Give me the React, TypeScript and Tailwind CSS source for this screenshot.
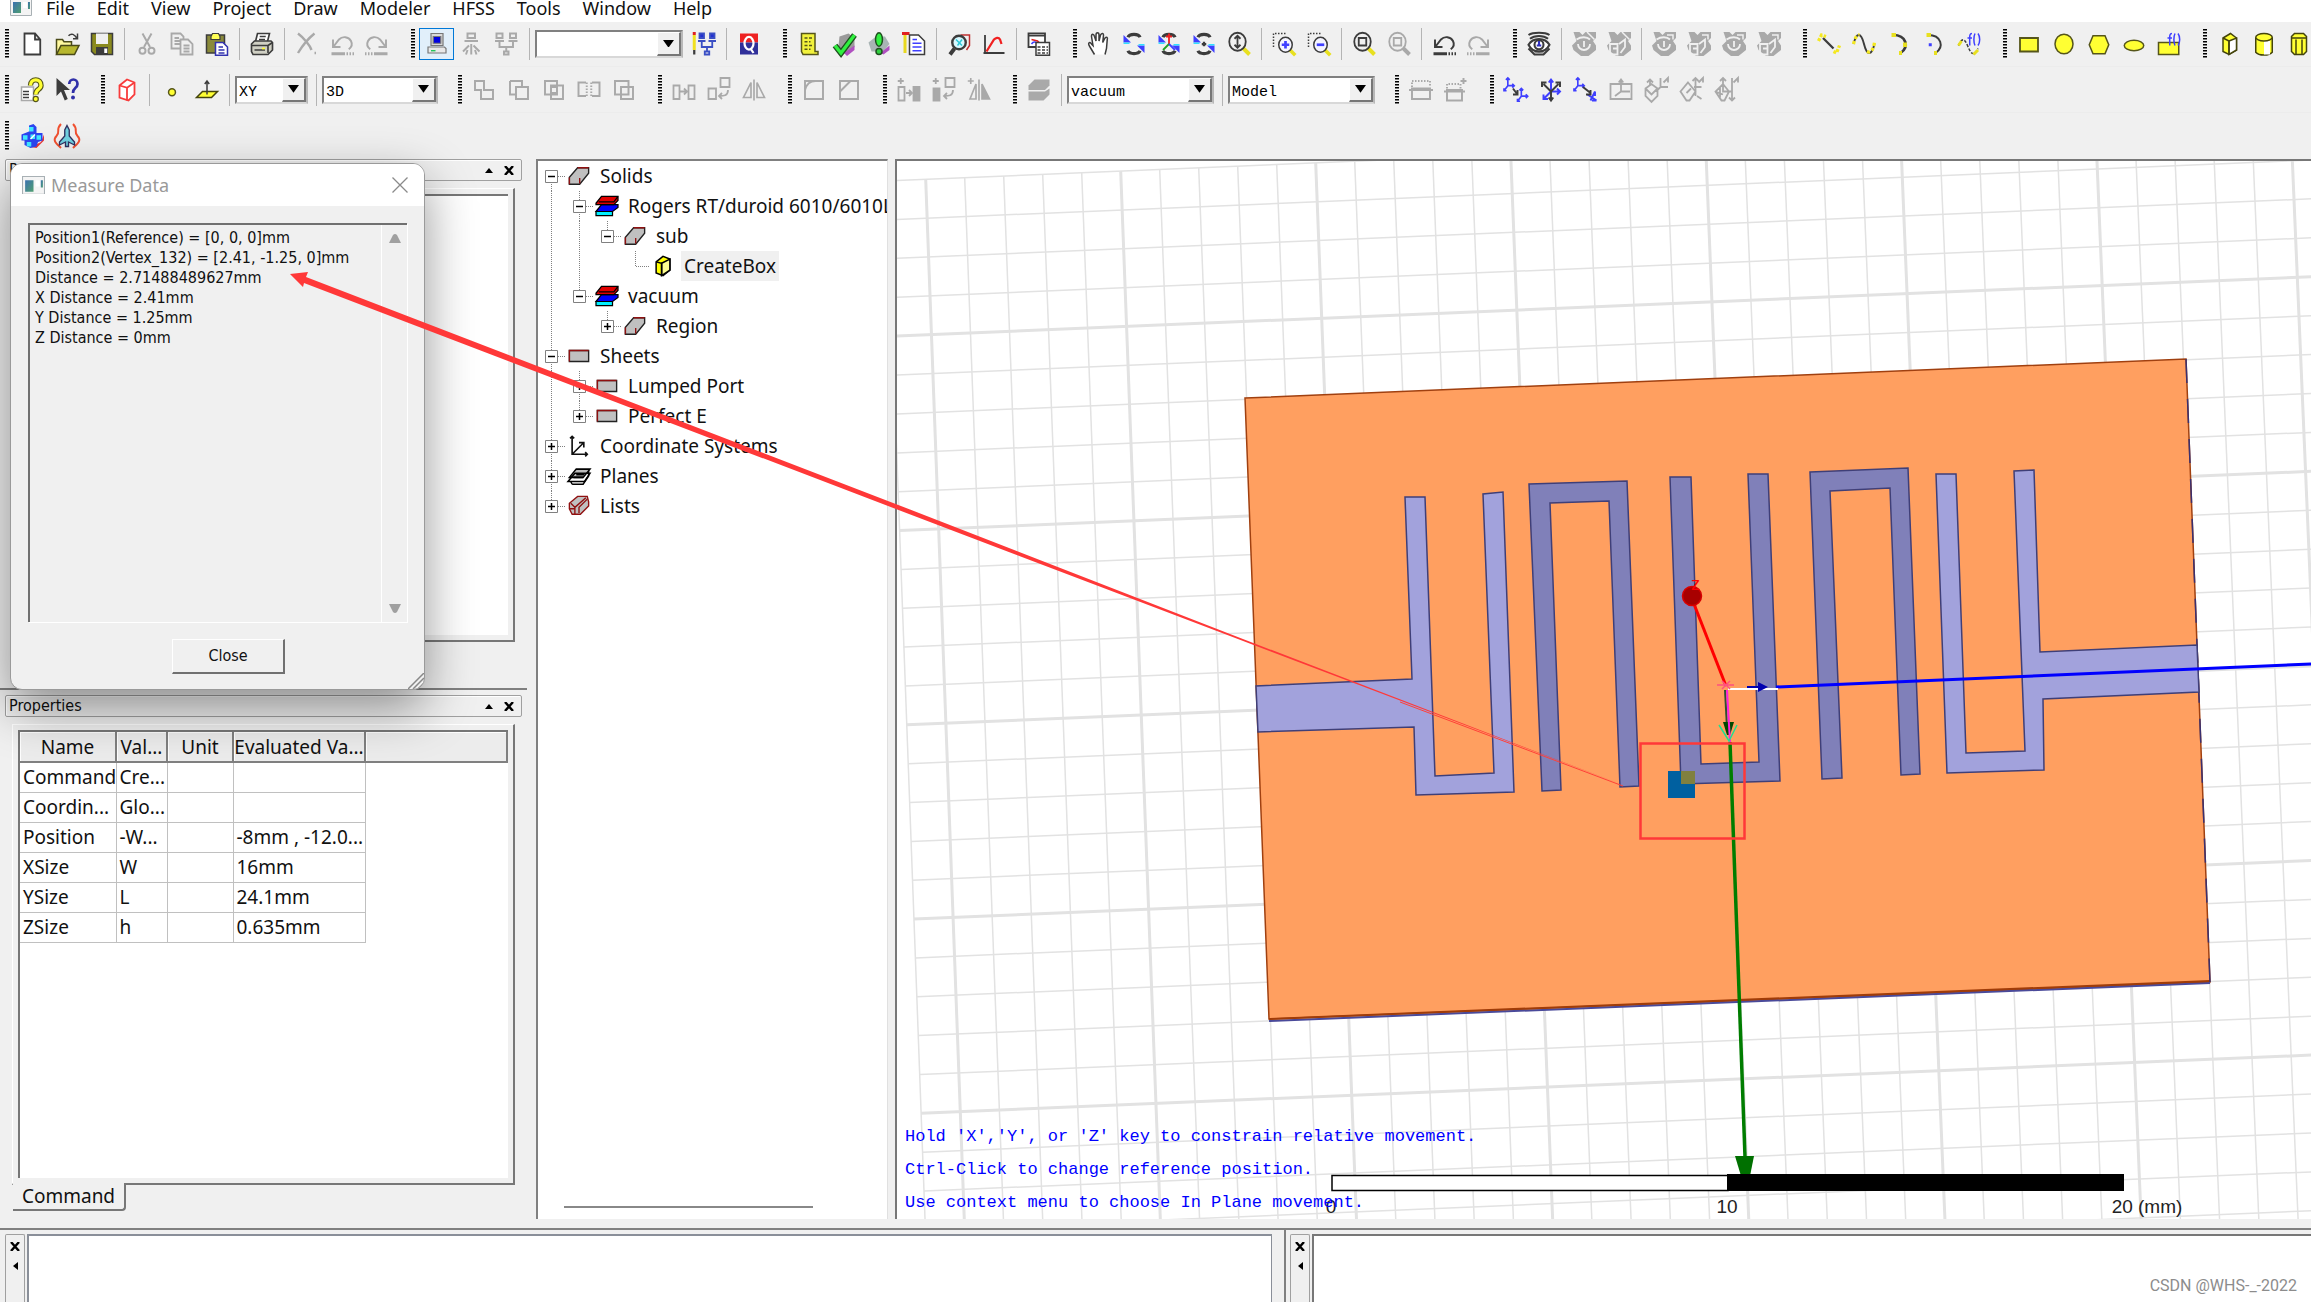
import type { ReactNode } from "react"

const G = "#a9a9a9"
const K = "#3c3c3c"
const Y = "#ffff33"
const B = "#3f3fff"

const menus = ["File", "Edit", "View", "Project", "Draw", "Modeler", "HFSS", "Tools", "Window", "Help"]

function undo(c: string) {
  return (
    <g fill="none" stroke={c} strokeWidth="1.3">
      <path d="M2 5v5h5M2.5 9.5L6 5a5 5 0 0 1 8 1c1 2 .5 4-1.500 5.500" />
      <path d="M1 14.500h9" strokeWidth="2" />
      <path d="M11 14.500h5" strokeWidth="2" strokeDasharray="1 1" />
    </g>
  )
}

function redo(c: string) {
  return (
    <g fill="none" stroke={c} strokeWidth="1.3">
      <path d="M14 5v5H9M13.500 9.500L10 5a5 5 0 0 0-8 1c-1 2-.5 4 1.500 5.500" />
      <path d="M6 14.500h9" strokeWidth="2" />
      <path d="M0 14.500h5" strokeWidth="2" strokeDasharray="1 1" />
    </g>
  )
}

function rotate(mid: ReactNode) {
  return (
    <g fill="none" stroke={K} strokeWidth="2.2">
      <path d="M4 3.500c1-2.500 7-2.500 8 0M4 12.500c1 2.500 7 2.500 8 0" />
      <path d="M1 2v5h5z" fill={B} stroke="none" />
      <path d="M15 14V9h-5z" fill={B} stroke="none" />
      <path d="M1 7.500h4M11 8.500h4" stroke="#33e0ff" strokeWidth="1" />
      {mid}
    </g>
  )
}

function lens(c: string, handle: string, inner: ReactNode) {
  return (
    <g fill="none" stroke={c} strokeWidth="1.2">
      <path d="M10.500 10.500L15 15" stroke={handle} strokeWidth="2.600" />
      <ellipse cx="7" cy="6.500" rx="5.500" ry="6" />
      {inner}
    </g>
  )
}

function zoomBox(inner: string) {
  return (
    <g fill="none">
      <path d="M1 10V1h9" stroke={K} strokeDasharray="1 1" />
      <path d="M12 12l3.500 3.500" stroke="#e8e020" strokeWidth="2.400" />
      <ellipse cx="9" cy="8.500" rx="4.500" ry="5" stroke={K} fill="#f4f4ff" />
      <path d={inner} stroke={B} strokeWidth="1.800" />
    </g>
  )
}

// greyed visibility buttons, an eye or a box behind a corner mark
function hidden(box: boolean, mark: string) {
  return (
    <g fill={G}>
      <path d="M1 0h4l2 2 2-2h7v4l-2 2 2 3v3l-5 4H6L1 12l-1-3 3-3z" />
      {box ? (
        <path d="M2 8h5v7H2zM4 11h3M8 8l4-3v5l-3 4" fill="none" stroke="#f0f0f0" strokeWidth="1.200" />
      ) : (
        <path d="M4 8a4 4 0 1 0 8 0M8 6v4M3 5c3-2 7-2 9 0" fill="none" stroke="#f0f0f0" strokeWidth="1.200" />
      )}
      <path d={mark} fill="none" stroke="#f0f0f0" />
    </g>
  )
}

const csys = "M3 0v6h5M3 6l-3 4M1.500 1.500L3 0l1.500 1.500M6.500 4.500L8 6 6.500 7.500M0 8v2h2"

const icons: Record<string, ReactNode> = {
  new: <path d="M3 1h7l3.500 4v10H3zM10 1v4h3.500" fill="#fff" stroke={K} strokeWidth="1.200" />,
  open: (
    <g stroke="#4a4a18" strokeWidth="1">
      <path d="M1 15V5h4l1 1.500h5V9" fill="#fff9a0" />
      <path d="M1 15l3-6h12l-3 6z" fill="#b7b72e" />
      <path d="M9 2.500c2-2 4-1 5.500 1.500M15 1v3.500h-3" fill="none" stroke={K} />
    </g>
  ),
  save: (
    <g>
      <path d="M1 1h14v14H3l-2-2z" fill="#8a8a1e" stroke={K} />
      <path d="M4 1h8v7H4z" fill="#f0f0f0" />
      <path d="M4 10h8v5H4z" fill={K} />
      <path d="M9.500 11h2v3h-2z" fill="#fff" />
    </g>
  ),
  cut: (
    <g fill="none" stroke={G} strokeWidth="1.300">
      <path d="M5 1l5 9M11 1l-5 9" />
      <circle cx="5" cy="12.500" r="2" />
      <circle cx="11" cy="12.500" r="2" />
    </g>
  ),
  copy: (
    <g fill="#f0f0f0" stroke={G} strokeWidth="1.200">
      <path d="M1 1h6l2 2v8H1zM3 4h3M3 6h4M3 8h4" />
      <path d="M7 5h5l3 3v7H7zM9 9h4M9 11h4M9 13h4" />
    </g>
  ),
  paste: (
    <g>
      <path d="M1 2h12v12H1z" fill="#8a8a3a" stroke={K} />
      <path d="M4 3l1-2h4l1 2v2H4z" fill="#ffff55" stroke={K} strokeWidth=".8" />
      <path d="M7 7h5l3 3v5.500H7z" fill="#fff" stroke="#3333b0" />
      <path d="M9 10h3M9 12h4M9 14h4" stroke="#3333b0" />
    </g>
  ),
  print: (
    <g stroke={K} strokeWidth="1.100">
      <path d="M5 1h8l-1.500 6H3.500z" fill="#fff" />
      <path d="M6.500 3h4M6 5h4" />
      <path d="M1 8l2-2h11l1 1v5l-3 3H2l-1-2z" fill="#d0d0c4" />
      <path d="M1 9h11v5M12 9l3-2M3 12h7" fill="none" />
      <path d="M8 11h2" stroke={Y} />
    </g>
  ),
  del: <path d="M2 1c4 3 8 8 9 11M13 1C8 5 5 9 2 14M13 14h1" fill="none" stroke={G} strokeWidth="1.600" />,
  undoOff: undo(G),
  redoOff: redo(G),
  undo: undo(K),
  redo: redo(G),
  local: (
    <g stroke="#777" strokeWidth=".8">
      <path d="M4 1h8v8H4z" fill="#d8d8d8" />
      <path d="M5.500 3h5v4.500h-5z" fill="#0000e0" />
      <path d="M2 10h11l1 1v3H2z" fill="#e8e8e8" />
      <path d="M4 12.500h3" stroke="#00c040" />
    </g>
  ),
  net: (
    <g fill="none" stroke={G} strokeWidth="1.300">
      <path d="M5 1h5v3H5zM3 6h9" />
      <path d="M7.500 8v7M6 9l-4 4M9 9l4 4M5 12l-1 3M10 12l1 3" />
    </g>
  ),
  dist: (
    <g fill="none" stroke={G} strokeWidth="1.300">
      <path d="M1 1h4v3H1zM10 1h4v3h-4zM0 6h6M9 6h6M3 6v4h9V6M7.500 10v3" />
      <path d="M6 13h3v2H6z" />
    </g>
  ),
  config: (
    <g fill="none" stroke="#3a4fc4" strokeWidth="1.200">
      <path d="M1.500 2v10" stroke="#f0e020" strokeWidth="2" />
      <path d="M1.500 0v2" stroke="#e02020" strokeWidth="2" />
      <path d="M1.500 12v3" stroke={K} strokeWidth="1.500" />
      <path d="M5 1h3v3H5zM12 1h3v3h-3z" fill="#2330d0" />
      <path d="M4 6h5M11 6h5M6.500 6v4h7V6M10 10v3M8.500 13h3v2h-3z" />
    </g>
  ),
  queue: (
    <g>
      <path d="M2 1h12v6H2z" fill="#ee2222" />
      <path d="M2 7h12v8H2z" fill="#30309a" />
      <ellipse cx="8" cy="7.500" rx="3" ry="4.200" fill="none" stroke="#fff" strokeWidth="1.500" />
      <path d="M9 11l2 3" stroke="#fff" strokeWidth="1.500" />
    </g>
  ),
  list: (
    <g stroke="#55551a" strokeWidth="1">
      <path d="M3 1h9v12h2v2H4L3 13z" fill="#f2f23c" />
      <path d="M5 4h5M5 6.500h4M5 9h5M5 11.500h4" strokeDasharray="2 1" />
    </g>
  ),
  check: (
    <g>
      <path d="M5 3l6-2 4 3v6l-5 5-6-3z" fill="#9a9a9a" />
      <path d="M8 14l7-5v3l-5 4z" fill="#b050c0" />
      <path d="M2 9l4 5 9-12" fill="none" stroke="#205020" strokeWidth="4" />
      <path d="M2 9l4 5 9-12" fill="none" stroke="#30f040" strokeWidth="2.200" />
    </g>
  ),
  analyze: (
    <g>
      <path d="M1 7l5-4h6l3 5-4 5H3z" fill="#a8b4b4" />
      <path d="M9 14l6-5v3l-4 3z" fill="#b050c0" />
      <ellipse cx="8" cy="5" rx="2.300" ry="4.500" fill="#30f040" stroke="#205020" />
      <circle cx="8" cy="13" r="2" fill="#30d040" stroke="#205020" />
    </g>
  ),
  notes: (
    <g>
      <path d="M2 2v12" stroke="#e8d820" strokeWidth="2" />
      <path d="M0 1h5" stroke="#e02020" strokeWidth="2" />
      <path d="M5 2h6l4 4v9H5z" fill="#fff" stroke={K} />
      <path d="M7 5h3M7 7.500h6M7 10h6M7 12.500h6" stroke={B} />
    </g>
  ),
  inspect: (
    <g fill="none">
      <path d="M9 2h6v7l-2 3" stroke="#c03030" />
      <circle cx="8" cy="7" r="4.500" fill="#d8f8ff" stroke={K} strokeWidth="1.600" />
      <path d="M6 5l4 4M10 5l-3 4" stroke="#30c8d8" />
      <path d="M5 11l-3 4" stroke={K} strokeWidth="2.600" />
    </g>
  ),
  plot: (
    <g fill="none">
      <path d="M2 2v12M1 14h14" stroke={K} strokeWidth="1.200" />
      <path d="M3 13L8 5c1-1 3-2 4 0l1 3" stroke="#f02020" strokeWidth="1.500" />
    </g>
  ),
  report: (
    <g>
      <path d="M1 1h11v9H1z" fill="#fff" stroke={K} strokeWidth="1.200" />
      <path d="M1 2.500h11" stroke={K} />
      <path d="M3 5l4 1 3 3" fill="none" stroke="#e02020" />
      <path d="M3 8c2-3 4 0 7 1" fill="none" stroke={B} />
      <path d="M6 7h9v8.500H6z" fill="#fff" stroke={K} />
      <path d="M7 10h7M7 12h7M7 14h7" stroke={K} strokeDasharray="2 1" />
    </g>
  ),
  hand: (
    <path
      d="M5 15l-3-5c-2-3 0-4 1-2l1 1-1-6c0-2 1.500-2 2 0l1 3V2c0-2 2-2 2 0v4l1-4c1-1.500 2-1 2 0l-.5 5 1.500-3c1-1 2-.5 1.500 1L13 11l-1 4"
      fill="#fff"
      stroke={K}
    />
  ),
  rot: rotate(null),
  rotAxis: rotate(
    <g strokeWidth="1.200">
      <path d="M8 1v7M6 3h4" stroke="#f02020" />
      <path d="M8 8l-4 4" stroke="#20a020" />
      <path d="M8 8l4 4" stroke={B} />
    </g>
  ),
  rotPoint: rotate(<path d="M8 6.500v3M6.500 8h3" strokeWidth="1.500" />),
  zoomDyn: lens(K, "#e8e020", <path d="M7 3v7M5 4.500L7 2.500l2 2M5 8.500l2 2 2-2" />),
  zoomIn: zoomBox("M9 6v5M6.500 8.500h5"),
  zoomOut: zoomBox("M6.500 8.500h5"),
  fit: lens(K, "#e8e020", <path d="M4.500 4h5v5h-5z" />),
  fitOff: lens(G, G, <path d="M4.500 4h5v5h-5z" />),
  eye: (
    <g fill="none" stroke={K} strokeWidth="1.400">
      <path d="M1 2c3-2 11-2 14 0M2 4.500c3-2.500 9-2.500 12 0" />
      <path d="M1 8.500c3-5 11-5 14 0-3 6-11 6-14 0z" fill="#fff" />
      <circle cx="8" cy="8.500" r="3" />
      <path d="M8 6v3.500M6.500 9h3" stroke="#3030c0" />
      <path d="M1 11l4 4h6l4-4M5 13h6" />
    </g>
  ),
  hideEye: hidden(false, "M10 0l5 5"),
  hideBox: hidden(true, "M10 0l5 5"),
  showEye: hidden(false, "M10 2h4v3"),
  showBox: hidden(true, "M10 2h4v3"),
  line: (
    <g fill="none">
      <path d="M4 4l7 7" stroke={K} strokeWidth="1.500" />
      <path d="M1 6l2-4 3 1M11 13l2 1 2-5" stroke="#f4e820" strokeWidth="2.200" strokeDasharray="2 1" />
    </g>
  ),
  spline: (
    <g fill="none">
      <path d="M1 8c2-8 5-8 7 0s5 8 7 0" stroke={K} strokeWidth="1.300" />
      <path d="M1 8c1-4 2-6 4-6M10 13c2 1 4 0 5-6" stroke="#f4e820" strokeWidth="2.200" strokeDasharray="2 1.500" />
    </g>
  ),
  arc: (
    <g fill="none">
      <path d="M4 2c9 0 11 8 5 12" stroke={K} strokeWidth="1.800" />
      <path d="M3 2h3M12 7v3M8 14h2" stroke="#e8e020" strokeWidth="2.600" />
    </g>
  ),
  arcC: (
    <g fill="none">
      <path d="M4 2c9 0 11 8 5 12" stroke={K} strokeWidth="1.300" />
      <path d="M3 2h3M8 14h2" stroke="#e8e020" strokeWidth="2.600" />
      <path d="M4.500 8.500h2" stroke={B} strokeWidth="2" />
    </g>
  ),
  eqCurve: (
    <g fill="none">
      <path d="M1 9c2-5 4-5 6 0s4 8 7 2" stroke={K} strokeDasharray="2 1" />
      <path d="M1 9l2-3M11 15l3-3" stroke="#e8e020" strokeWidth="2" />
      <path d="M10 1c-2 0-1.500 2-1.500 8M7 4h3M12 1c-1 2-1 6 0 8M14 1c1.500 2 1.500 6 0 8" stroke={B} />
    </g>
  ),
  rect: <path d="M2 4h12v9H2z" fill={Y} stroke="#55551a" strokeWidth="1.200" />,
  circle: <ellipse cx="8" cy="8" rx="6" ry="6.500" fill={Y} stroke="#55551a" />,
  hexagon: <path d="M4 2.500h8l2.500 6-2.500 6H4l-2.500-6z" fill={Y} stroke="#55551a" />,
  ellipse: <ellipse cx="8" cy="9" rx="6.500" ry="3.500" fill={Y} stroke="#55551a" />,
  eqSurf: (
    <g>
      <path d="M1 7h13.500v8H1z" fill={Y} stroke="#55551a" />
      <path d="M10 1c-2 0-1.500 2-1.500 8M7 4h3M12 1c-1 2-1 6 0 8M14 1c1.500 2 1.500 6 0 8" fill="none" stroke={B} />
    </g>
  ),
  box: (
    <g stroke="#44440c" strokeWidth="1">
      <path d="M4 4l5-3 4 3v8l-5 3-4-2z" fill={Y} />
      <path d="M8 6l5-2v8l-5 3z" fill="#fff" />
      <path d="M4 4l4 2v9" fill="none" />
    </g>
  ),
  cylinder: (
    <g stroke="#44440c" strokeWidth="1">
      <path d="M2.500 3.500v10c2 2.500 9 2.500 11 0v-10" fill={Y} />
      <path d="M8 6h4v9H8z" fill="#fff" stroke="none" />
      <ellipse cx="8" cy="3.500" rx="5.500" ry="2.500" fill={Y} />
    </g>
  ),
  prism: (
    <g stroke="#44440c" strokeWidth="1">
      <path d="M3 3l2-2h6l2 2v10l-2 2H5l-2-2z" fill={Y} />
      <path d="M3 4h10M6 5v10M10 5v10" />
    </g>
  ),
  help: (
    <g>
      <path d="M1 6h8v9H1z" fill="#fff" stroke={G} />
      <path d="M2 9h4M2 11h4M2 13h4" stroke={K} />
      <path d="M7 5c0-5 7-5 7 0 0 3-3.500 2-3.500 6" fill="none" stroke="#55551a" strokeWidth="3.600" />
      <path d="M7 5c0-5 7-5 7 0 0 3-3.500 2-3.500 6" fill="none" stroke={Y} strokeWidth="2.200" />
      <circle cx="10.500" cy="14" r="1.700" fill={Y} stroke="#55551a" strokeWidth=".8" />
    </g>
  ),
  what: (
    <g>
      <path d="M1 0v12l3-3 2.500 6 2-1L6 8h4z" fill={K} />
      <path d="M9.500 4c0-4 5.500-4 5.500 0 0 3-3 2-3 6" fill="none" stroke="#3030a8" strokeWidth="1.800" />
      <circle cx="12" cy="13" r="1.300" fill="#3030a8" />
    </g>
  ),
  redBox: (
    <g fill="none" stroke="#f83c3c" strokeWidth="1.200">
      <path d="M3 5l5-4 5 2v8l-4 4-6-2z" fill="#fff" />
      <path d="M3 5l5 1.500V15M8 6.500L13 3" />
    </g>
  ),
  point: <circle cx="8" cy="9.500" r="2.300" fill={Y} stroke="#55551a" />,
  plane: (
    <g stroke="#44440c" strokeWidth="1">
      <path d="M1 13l4-4h10l-4 4z" fill={Y} />
      <path d="M8 11V2M6.500 4L8 2l1.500 2" fill="none" stroke={K} />
    </g>
  ),
  unite: <path d="M2 2h6v6h6v6H6V8H2z" fill="none" stroke={G} strokeWidth="1.300" />,
  subtract: <path d="M2 2h8v4M2 2v9h4M6 6h8v8H6z" fill="none" stroke={G} strokeWidth="1.300" />,
  intersect: <path d="M2 2h8v9H2zM6 5h8v9H6zM6 6h4v4H6z" fill="none" stroke={G} strokeWidth="1.300" />,
  split: (
    <g fill="none" stroke={G} strokeWidth="1.300">
      <path d="M6 3H1v9h5M10 3h5v9h-5" />
      <path d="M6.500 3v9M9.500 3v9" strokeDasharray="1 1" />
    </g>
  ),
  imprint: <path d="M2 2h9v9H2zM6 6h8v8H6z" fill="none" stroke={G} strokeWidth="1.300" />,
  move: <path d="M1 5h4v9H1zM11 5h4v9h-4zM5 9h5M8 7l2 2-2 2" fill="none" stroke={G} strokeWidth="1.200" />,
  turn: <path d="M1 7h5v7H1zM9 0h6v6H9zM14 8c0 4-3 4-6 4M10 10l-2 2 2 2" fill="none" stroke={G} strokeWidth="1.200" />,
  mirror: <path d="M6 3v10H1zM8 1v14M10 3v10h5z" fill="none" stroke={G} strokeWidth="1.100" />,
  fillet: <path d="M2 2h12v12H2zM2 8c1-4 3-6 7-6" fill="none" stroke={G} strokeWidth="1.300" />,
  chamfer: <path d="M2 2h12v12H2zM2 9l7-7" fill="none" stroke={G} strokeWidth="1.300" />,
  dupLine: (
    <g fill="none" stroke={G} strokeWidth="1.200">
      <path d="M2.500 0v4M.5 2h4M1 6h4v9H1zM6 10h4M8 8l2 2-2 2" />
      <path d="M11 6h4v9h-4z" fill={G} />
    </g>
  ),
  dupAxis: (
    <g fill="none" stroke={G} strokeWidth="1.200">
      <path d="M2.500 0v4M.5 2h4M9 0h6v6H9zM14 8c0 4-3 4-6 4M10 10l-2 2 2 2" />
      <path d="M1 7h4v8H1z" fill={G} />
    </g>
  ),
  dupMirror: (
    <g fill="none" stroke={G} strokeWidth="1.100">
      <path d="M2.500 0v4M.5 2h4M6 4v10H2zM8 1v14" />
      <path d="M10 4v10h5z" fill={G} />
    </g>
  ),
  layers: (
    <g fill={G}>
      <path d="M1 5l4-4h10v4l-3 3H1z" />
      <path d="M1 9h11l3-2v4l-4 4H1z" />
    </g>
  ),
  section: (
    <g fill="none" stroke={G} strokeWidth="1.300">
      <path d="M2 7h12v7H2zM0 8h16" />
      <path d="M2 6V2h12v4" strokeDasharray="1 1" />
    </g>
  ),
  sectionAdd: (
    <g fill="none" stroke={G} strokeWidth="1.300">
      <path d="M2 8h10v7H2zM0 9h14M13 0v4M11 2h4" />
      <path d="M2 7V4h9v3" strokeDasharray="1 1" />
    </g>
  ),
  csOffset: (
    <g fill="none" stroke={B} strokeWidth="1.300">
      <path d={csys} transform="scale(.85)" />
      <path d={csys} transform="translate(9 7) scale(.85)" />
      <path d="M6 7l3 4M9 8v3H6" stroke={K} />
    </g>
  ),
  csRotate: (
    <g fill="none" strokeWidth="1.300">
      <path d="M8 1v8h6M8 9l-5 5M6.500 3L8 1l1.500 2M12 7l2 2-2 2M3 11v3h3" stroke={B} />
      <path d="M8 9L3 4M8 9l5-5M8 9v6M2 6V3h3M11 3h3v3M6.500 13L8 15l1.500-2" stroke={K} />
    </g>
  ),
  csBoth: (
    <g fill="none" stroke={B} strokeWidth="1.300">
      <path d={csys} transform="scale(.85)" />
      <path d="M11 15l3-6M9 11l6 4M14 9v3M15 15h-3" />
      <path d="M6 6l5 4M11 8v3H8" stroke={K} />
    </g>
  ),
  csFace: <path d="M1 4h14v10H1zM8 1v8h6M8 9l-4 3M6.500 3L8 1l1.500 2" fill="none" stroke={G} strokeWidth="1.200" />,
  csBox: <path d="M1 7l4-3 4 3v5l-4 4-4-4zM1 7l4 4 4-4M4 1v4M2 3l2-2 2 2M11 0v6h5M11 6L8 9M13 3l3-3v3" fill="none" stroke={G} strokeWidth="1.200" />,
  csObj: <path d="M6 3l5 6-4 6H5L1 9zM5 10l3-3M11 0v12M10 6h5M13 3l3-3v3M9 2l2-2 2 2M12 12l3 2" fill="none" stroke={G} strokeWidth="1.200" />,
  csEdge: <path d="M6 4l4 5-3 6H5L1 9zM4 6v7M6 0v9h6M4 2l2-2 2 2M12 0v15M10 13l2 2 2-2M13 3l3-3v3M1 9l5 2" fill="none" stroke={G} strokeWidth="1.200" />,
  mesh: (
    <g>
      <path d="M5 15l6 1 5-5V7l-2 5-4 2z" fill="#e83838" />
      <path d="M6 1l3-1 2 2v4h4v5l-3 1-1 3-4 1-4-2v-3H1V7l5-2z" fill="#2c44f0" />
      <path d="M6 2h3v3H6zM2 7.500h3v3H2zM7 7h3v3H7zM11 7.500h3v3h-3zM4.500 12h3v3h-3z" fill="#40e8ff" />
      <path d="M7 10l3-3" stroke="#fff" />
    </g>
  ),
  plane3d: (
    <g fill="none">
      <path d="M4 0C0 4 4 5 1 8s0 5 3 8M12 0c4 4 0 5 3 8s0 5-3 8" stroke="#f05030" strokeWidth="1.300" />
      <path d="M8 1l1.500 3v4l3.500 4v2l-4-2v3H7v-3l-4 2v-2l3.500-4V4z" fill="#70d0e0" stroke="#303060" strokeWidth=".9" />
    </g>
  ),
  // model tree
  tSolid: (
    <g>
      <path d="M1 14V9l6-7h8v4l-6.500 8z" fill="#c0c0c0" stroke="#222" />
      <path d="M1 14V9M7 2h8M8.500 13.500V9.500" fill="none" stroke="#901010" />
    </g>
  ),
  tMat: (
    <g stroke="#000" strokeWidth=".9">
      <path d="M0 12h12v3H0z" fill="#00f0ff" />
      <path d="M0 12l4-5h12v2l-4 3z" fill="#0000ff" />
      <path d="M0 6l4-5h12v3l-3 3H0z" fill="#e00000" />
      <path d="M2 5h11l3-4" fill="none" />
    </g>
  ),
  tSheet: (
    <g fill="none">
      <path d="M1 4h14v8H1z" fill="#c0c0c0" stroke="#222" />
      <path d="M1 12V4h14" stroke="#901010" />
    </g>
  ),
  tBox: (
    <g stroke="#000" strokeWidth="1.100">
      <path d="M3 5l5-4 5 2v8l-5 4-5-2z" fill="#ffff00" />
      <path d="M7 6l6-3v8l-6 4z" fill="#ffff90" />
      <path d="M3 5l4 1v9" fill="none" />
    </g>
  ),
  tAxes: <path d="M3 1v13h11M3 14l8-8M1.500 2.500L3 1l1.500 1.500M12.500 12.500L14 14l-1.500 1.500M8 5.500h3.500V9" fill="none" stroke="#111" strokeWidth="1.200" />,
  tPlanes: (
    <g fill="#bbb" stroke="#000" strokeWidth="1.100">
      <path d="M1 9l5-6h10l-5 6z" />
      <path d="M0 12l5-6h11l-4 6z" fill="none" />
      <path d="M3 14h8l4-6V4M4 9h7M6 7h6M3 14l-1-2" fill="none" />
    </g>
  ),
  tLists: (
    <g fill="#c0c0c0" stroke="#901010" strokeWidth="1">
      <path d="M3 14l-2-4V6l6-5h7l1 4v3l-6 6z" />
      <path d="M2 6l3 3v5M5 9l8-7M8 13V9l6-6M1 10h4" fill="none" />
    </g>
  ),
}

function Icon({ name, className = "size-6" }: { name: string; className?: string }) {
  return (
    <svg viewBox="0 0 16 16" className={className} overflow="visible" aria-hidden="true">
      {icons[name]}
    </svg>
  )
}

function ToolButton({ name, active }: { name: string; active?: boolean }) {
  return (
    <button
      type="button"
      aria-label={name}
      className={
        active
          ? "flex h-8 w-[35px] shrink-0 items-center justify-center border border-[#0078d7] bg-[#e1effa]"
          : "flex h-8 w-[35px] shrink-0 items-center justify-center"
      }
    >
      <Icon name={name} />
    </button>
  )
}

function Grip({ first }: { first?: boolean }) {
  return (
    <div className={first ? "flex w-[14px] shrink-0 justify-center" : "flex w-[25px] shrink-0 justify-end pr-[4px]"}>
      <div className="h-[30px] w-[4px] bg-[repeating-linear-gradient(#000_0_1px,#777_1px_2px,#f4f4f4_2px_3px)]" />
    </div>
  )
}

function Sep() {
  return (
    <div className="flex w-[10px] shrink-0 justify-center">
      <div className="h-8 w-px bg-[#b4b4b4]" />
    </div>
  )
}

function Combo({ label, value, className }: { label: string; value: string; className: string }) {
  return (
    <div className={`relative mr-[3px] ml-px h-7 shrink-0 border-2 border-[#808080] border-r-[#b8b8b8] border-b-[#d8d8d8] bg-white ${className}`}>
      <select
        aria-label={label}
        className="size-full appearance-none bg-transparent pl-[2px] font-['Liberation_Mono',monospace] text-[15px] text-black"
      >
        <option>{value}</option>
      </select>
      <span className="pointer-events-none absolute inset-y-0 right-0 flex w-[24px] items-center justify-center border border-white border-r-2 border-r-[#777] border-b-2 border-b-[#777] bg-[#f0f0f0]">
        <svg viewBox="0 0 10 7" className="w-[11px]">
          <path d="M0 0h10L5 7z" />
        </svg>
      </span>
    </div>
  )
}

// "|" draws a grip, "-" a separator, anything else is an icon name
function Tools({ items }: { items: string }) {
  return (
    <>
      {items.split(" ").map((item, i) => {
        if (item === "|") return <Grip key={i} />
        if (item === "-") return <Sep key={i} />
        return <ToolButton key={i} name={item} active={item === "local"} />
      })}
    </>
  )
}

function AppIcon({ className }: { className: string }) {
  return (
    <svg viewBox="0 0 22 18" className={className}>
      <defs>
        <linearGradient id="appIcon" x1="0" y1="0" x2="1" y2="1">
          <stop offset="0" stopColor="#3a70b0" />
          <stop offset="1" stopColor="#50a070" />
        </linearGradient>
      </defs>
      <path d="M.5.5h21v17H.500z" fill="#f4f4f4" stroke="#a8b0b4" />
      <path d="M3 4h8v11H3z" fill="url(#appIcon)" />
      <path d="M13 4h4v6h-4z" fill="#fff" />
      <path d="M18 4h2v7h-2z" fill="url(#appIcon)" />
    </svg>
  )
}

function TitleBar({ title }: { title: string }) {
  return (
    <div className="mx-[5px] flex h-[22px] items-center rounded-[2px] border border-[#a0a0a0] px-[3px] shadow-[inset_1px_1px_0_#fff]">
      <span className="font-['DejaVu_Sans_Condensed','DejaVu_Sans',sans-serif] text-[16px] leading-5 text-[#111]">{title}</span>
      <button type="button" aria-label="Collapse" className="mr-[11px] ml-auto">
        <svg viewBox="0 0 8 5" className="w-2">
          <path d="M0 5h8L4 0z" />
        </svg>
      </button>
      <button type="button" aria-label="Close panel" className="mr-[4px]">
        <svg viewBox="0 0 10 9" className="w-[10px]">
          <path d="M1 0l8 9M9 0L1 9" stroke="#000" strokeWidth="2.400" />
        </svg>
      </button>
    </div>
  )
}

interface TreeRow {
  label: string
  icon: string
  guides: string
  up?: boolean
  down?: boolean
  box?: "+" | "-"
  selected?: boolean
}

const tree: TreeRow[] = [
  { label: "Solids", icon: "tSolid", guides: "", down: true, box: "-" },
  { label: "Rogers RT/duroid 6010/6010LM", icon: "tMat", guides: "|", up: true, down: true, box: "-" },
  { label: "sub", icon: "tSolid", guides: "||", up: true, box: "-" },
  { label: "CreateBox", icon: "tBox", guides: "||.", up: true, selected: true },
  { label: "vacuum", icon: "tMat", guides: "|", up: true, box: "-" },
  { label: "Region", icon: "tSolid", guides: "|.", up: true, box: "+" },
  { label: "Sheets", icon: "tSheet", guides: "", up: true, down: true, box: "-" },
  { label: "Lumped Port", icon: "tSheet", guides: "|", up: true, down: true, box: "+" },
  { label: "Perfect E", icon: "tSheet", guides: "|", up: true, box: "+" },
  { label: "Coordinate Systems", icon: "tAxes", guides: "", up: true, down: true, box: "+" },
  { label: "Planes", icon: "tPlanes", guides: "", up: true, down: true, box: "+" },
  { label: "Lists", icon: "tLists", guides: "", up: true, box: "+" },
]

function ModelTree() {
  return (
    <ul className="overflow-hidden">
      {tree.map((row) => (
        <li key={row.label} className="flex h-[30px] items-center">
          {row.guides.split("").map((g, i) => (
            <svg key={i} viewBox="0 0 28 30" className="h-[30px] w-7 shrink-0">
              {g === "|" && <path d="M13.500 0v30" stroke="#808080" strokeDasharray="1 1" />}
            </svg>
          ))}
          <svg viewBox="0 0 28 30" className="h-[30px] w-7 shrink-0">
            <g stroke="#808080" strokeDasharray="1 1">
              {row.up && <path d="M13.500 0v15" />}
              {row.down && <path d="M13.500 15v15" />}
              <path d="M14 15.500h14" />
            </g>
            {row.box && <path d="M7.500 9.500h12v12h-12z" fill="#fff" stroke="#808080" />}
            {row.box && <path d="M10 15.500h7" stroke="#000" strokeWidth="1.500" />}
            {row.box === "+" && <path d="M13.500 12v7" stroke="#000" strokeWidth="1.500" />}
          </svg>
          <span className="flex w-[26px] shrink-0 justify-center">
            <Icon name={row.icon} className="size-[22px]" />
          </span>
          <span
            className={
              row.selected
                ? "ml-[5px] bg-[#f0f0f0] px-[3px] text-[19px] leading-[30px] whitespace-nowrap"
                : "ml-[5px] px-[3px] text-[19px] leading-[30px] whitespace-nowrap"
            }
          >
            {row.label}
          </span>
        </li>
      ))}
    </ul>
  )
}

const properties = [
  ["Command", "Cre...", "", ""],
  ["Coordin...", "Glo...", "", ""],
  ["Position", "-W...", "", "-8mm , -12.0..."],
  ["XSize", "W", "", "16mm"],
  ["YSize", "L", "", "24.1mm"],
  ["ZSize", "h", "", "0.635mm"],
]

function PropertiesTable() {
  return (
    <table className="w-full table-fixed border-collapse text-left text-[19px] leading-[28px]">
      <colgroup>
        <col className="w-[96px]" />
        <col className="w-[51px]" />
        <col className="w-[66px]" />
        <col className="w-[132px]" />
        <col />
      </colgroup>
      <thead>
        <tr className="h-[30px] bg-[#ececec]">
          {["Name", "Val...", "Unit", "Evaluated Va...", ""].map((h, i) => (
            <th
              key={i}
              className="border-r-2 border-b-2 border-[#808080] p-0 text-center font-normal whitespace-nowrap shadow-[inset_1px_1px_0_#fff]"
            >
              {h}
            </th>
          ))}
        </tr>
      </thead>
      <tbody>
        {properties.map((row) => (
          <tr key={row[0]} className="h-[30px]">
            {row.map((cell, i) => (
              <td key={i} className="overflow-hidden border-r border-b border-[#c0c0c0] p-0 pl-[3px] whitespace-nowrap">
                {cell}
              </td>
            ))}
            <td />
          </tr>
        ))}
      </tbody>
    </table>
  )
}

// projected grid node, i across and j down, one unit is 1 mm
function node(i: number, j: number) {
  const x = 925.7 + 39 * i + 1.44 * j + 0.006 * i * j
  const y = 179.3 - 1.64 * i + 38.85 * j
  return `${x.toFixed(1)} ${y.toFixed(1)}`
}

const cols = Array.from({ length: 39 }, (_, n) => n - 1)
const rows = Array.from({ length: 30 }, (_, n) => n)

const light = [
  "1405,497 1425,497 1435,776 1494,773 1483,494 1503,492 1514,792 1416,795 1414,727 1258,732 1256,686 1412,679",
  "1936,474 1956,474 1966,753 2025,751 2014,471 2034,470 2040,652 2197,645 2199,692 2043,699 2044,770 1947,773",
]
const dark = [
  "1529,484 1627,481 1639,786 1620,787 1609,501 1550,503 1561,790 1542,791",
  "1670,477 1691,477 1701,764 1759,762 1748,474 1768,474 1780,781 1681,784",
  "1810,472 1908,468 1920,774 1901,775 1890,488 1830,491 1842,778 1822,779",
]

function Viewport() {
  return (
    <svg viewBox="897 161 1414 1058" preserveAspectRatio="xMinYMin slice" className="absolute inset-0 size-full">
      <g stroke="#e2e2e2" fill="none">
        {cols.map((i) => (
          <path key={i} d={`M${node(i, 0)}L${node(i, 29)}`} strokeWidth={i % 5 === 0 ? 3 : 1.5} />
        ))}
        {rows.map((j) => (
          <path key={j} d={`M${node(-1, j)}L${node(37, j)}`} strokeWidth={j % 5 === 4 ? 3 : 1.5} />
        ))}
      </g>

      <path d="M1245 398L2186 359l24 623-941 37z" fill="#ff9f60" stroke="#a04010" strokeWidth="1.500" />
      <path d="M1269 1021L2210 983" stroke="#4a4a9a" strokeWidth="2" />
      <path d="M1269 1019L2210 981" stroke="#a03c08" strokeWidth="2" />
      <path d="M2186 359l24 623" stroke="#3a3070" strokeWidth="1.500" strokeDasharray="24 16" />
      {light.map((p) => (
        <polygon key={p} points={p} fill="#a2a2dc" stroke="#3f3f78" strokeWidth="1.500" />
      ))}
      {dark.map((p) => (
        <polygon key={p} points={p} fill="#8080b9" stroke="#3f3f78" strokeWidth="1.500" />
      ))}

      {/* picked vertex */}
      <path d="M1668 771h27v27h-27z" fill="#0060a0" />
      <path d="M1681 771h14v13h-14z" fill="#80803f" />

      {/* axes */}
      <path d="M1776 687L2311 664" stroke="#0000ff" strokeWidth="3" />
      <path d="M1730 742L1745 1157" stroke="#007d00" strokeWidth="3.500" />
      <path d="M1735 1156h19l-4 20h-9z" fill="#007000" />
      <path d="M1728 689h50" stroke="#fff" strokeWidth="2" />
      <path d="M1747 687h14" stroke="#0000b0" strokeWidth="2" />
      <path d="M1758 682l10 5-10 5z" fill="#0000b0" />
      <path d="M1725 690l2 38" stroke="#305030" strokeWidth="2" />
      <path d="M1723 722h11l-4 13h-3z" fill="#004800" />
      <path d="M1727 690l3 52" stroke="#ff20e0" strokeWidth="2" />
      <path d="M1719 725l10 16 8-16" fill="none" stroke="#20e090" strokeWidth="1.500" />
      <path d="M1694 604L1726 686" stroke="#ff0000" strokeWidth="3" />
      <circle cx="1692" cy="596" r="9.500" fill="#a80000" stroke="#d80000" strokeWidth="1.500" />
      <text x="1691" y="590" fontSize="18" fill="#ff0000" fontFamily="Liberation Sans, sans-serif">
        z
      </text>
      <path d="M1717 685h17M1722 681l8 8M1730 681l-8 8" stroke="#ff5080" strokeWidth="1.500" />

      {/* scale bar */}
      <path d="M1332 1175.500h396v15h-396z" fill="#fff" stroke="#000" strokeWidth="1.500" />
      <path d="M1727 1174h397v17h-397z" />
      <g fontSize="19" fill="#222" textAnchor="middle" fontFamily="Liberation Sans, Arial, sans-serif">
        <text x="1331" y="1213">0</text>
        <text x="1727" y="1213">10</text>
        <text x="2147" y="1213">20 (mm)</text>
      </g>
    </svg>
  )
}

function MeasureDialog() {
  return (
    <section
      aria-label="Measure Data"
      className="absolute top-[163px] left-[10px] z-10 flex h-[527px] w-[415px] flex-col overflow-hidden rounded-xl border border-[#9a9a9a] bg-[#f0f0f0] shadow-[0_18px_50px_rgba(0,0,0,0.42)]"
    >
      <header className="flex h-[42px] items-center bg-white pr-4 pl-[11px]">
        <AppIcon className="w-[23px]" />
        <h2 className="ml-[6px] text-[18px] leading-6 text-[#999]">Measure Data</h2>
        <button type="button" aria-label="Close dialog" className="ml-auto">
          <svg viewBox="0 0 16 16" className="size-4">
            <path d="M.5.5l15 15M15.500.500l-15 15" stroke="#8a8a8a" strokeWidth="1.300" />
          </svg>
        </button>
      </header>
      <div className="mx-[17px] mt-[17px] flex h-[399px] border-t-2 border-l-2 border-[#707070] shadow-[1px_1px_0_#fff]">
        <div className="flex-1 overflow-hidden pt-[3px] pl-[5px] font-['DejaVu_Sans_Condensed','DejaVu_Sans',sans-serif] text-[16px] leading-5 whitespace-nowrap text-[#111]">
          <p>Position1(Reference) = [0, 0, 0]mm</p>
          <p>Position2(Vertex_132) = [2.41, -1.25, 0]mm</p>
          <p>Distance = 2.71488489627mm</p>
          <p>X Distance = 2.41mm</p>
          <p>Y Distance = 1.25mm</p>
          <p>Z Distance = 0mm</p>
        </div>
        <div className="flex w-[26px] flex-col items-center justify-between border-l border-white py-[9px]">
          <svg viewBox="0 0 12 9" className="w-3">
            <path d="M0 9h12L8 1Q6-1 4 1z" fill="#a0a0a0" />
          </svg>
          <svg viewBox="0 0 12 9" className="w-3">
            <path d="M0 0h12L8 8Q6 10 4 8z" fill="#a0a0a0" />
          </svg>
        </div>
      </div>
      <button
        type="button"
        className="mt-[17px] ml-[161px] h-[35px] w-[113px] border border-white border-r-2 border-r-[#707070] border-b-2 border-b-[#707070] font-['DejaVu_Sans_Condensed','DejaVu_Sans',sans-serif] text-[16px] text-[#111]"
      >
        Close
      </button>
      <svg viewBox="0 0 16 16" className="absolute right-0 bottom-0 size-4">
        <path d="M0 16L16 0M5 16L16 5M10 16l6-6" stroke="#888" strokeWidth="1.500" />
      </svg>
    </section>
  )
}

function DockHandle() {
  return (
    <div className="flex w-[20px] shrink-0 flex-col items-center gap-[11px] rounded-t-[2px] border border-b-0 border-[#a0a0a0] pt-[7px]">
      <button type="button" aria-label="Close panel" className="h-[9px]">
        <svg viewBox="0 0 10 9" className="w-[10px]">
          <path d="M1 0l8 9M9 0L1 9" stroke="#000" strokeWidth="2.400" />
        </svg>
      </button>
      <button type="button" aria-label="Collapse" className="h-2">
        <svg viewBox="0 0 5 8" className="w-[5px]">
          <path d="M5 0v8L0 4z" />
        </svg>
      </button>
    </div>
  )
}

export default function App() {
  return (
    <div className="relative flex h-screen flex-col overflow-hidden bg-[#f0f0f0] font-['Noto_Sans','Open_Sans',sans-serif] text-[#111]">
      <nav className="flex h-[22px] shrink-0 items-start bg-white pl-[10px]">
        <AppIcon className="mt-[-2px] w-[22px]" />
        <div className="ml-[3px] flex">
          {menus.map((m) => (
            <button key={m} type="button" className="px-[11px] text-[18px] leading-[17px]">
              {m}
            </button>
          ))}
        </div>
      </nav>

      <div className="flex h-[45px] shrink-0 items-center overflow-hidden border-b border-[#ececec]">
        <Grip first />
        <Tools items="new open save - cut copy paste - print - del undoOff redoOff | local net dist -" />
        <Combo label="Machine" value="" className="w-[148px]" />
        <Tools items="config - queue | list check analyze notes - inspect plot - report | hand rot rotAxis rotPoint zoomDyn - zoomIn zoomOut - fit fitOff - undo redo | eye - hideEye hideBox - showEye showBox showEye showBox | line spline arc arcC eqCurve | rect circle hexagon ellipse eqSurf | box cylinder prism" />
      </div>
      <div className="flex h-[46px] shrink-0 items-center overflow-hidden border-b border-[#ececec]">
        <Grip first />
        <Tools items="help what | redBox - point plane -" />
        <Combo label="Plane" value="XY" className="w-[73px]" />
        <Sep />
        <Combo label="Draw mode" value="3D" className="w-[116px]" />
        <Tools items="| unite subtract intersect split imprint | move turn mirror | fillet chamfer | dupLine dupAxis dupMirror | layers -" />
        <Combo label="Material" value="vacuum" className="w-[147px]" />
        <Sep />
        <Combo label="Model type" value="Model" className="w-[147px]" />
        <Tools items="| section sectionAdd | csOffset csRotate csBoth csFace csBox csObj csEdge" />
      </div>
      <div className="flex h-[45px] shrink-0 items-center">
        <Grip first />
        <Tools items="mesh plane3d" />
      </div>

      <main className="flex min-h-0 flex-1">
        <div className="flex w-[527px] shrink-0 flex-col">
          <div className="flex h-[532px] flex-col border-b-2 border-[#808080] pt-px">
            <TitleBar title="Project Manager" />
            <div className="mx-[12px] mt-[7px] mb-[46px] flex-1 border border-white border-r-2 border-r-[#777] border-b-2 border-b-[#777] p-[5px]">
              <div className="size-full border-t-2 border-l-2 border-[#777] bg-white" />
            </div>
          </div>
          <div className="flex min-h-0 flex-1 flex-col pt-[5px] pb-[17px]">
            <TitleBar title="Properties" />
            <div className="mx-[12px] mt-[7px] min-h-0 flex-1 border border-b-2 border-white border-r-2 border-r-[#777] border-b-[#777] p-[5px]">
              <div className="size-full overflow-hidden border-t-2 border-l-2 border-[#777] bg-white">
                <PropertiesTable />
              </div>
            </div>
            <button
              type="button"
              className="relative ml-[13px] -mt-[2px] h-[28px] w-[113px] self-start rounded-br-[4px] border-r-2 border-b-2 border-[#777] bg-[#f0f0f0] text-[19px] leading-6"
            >
              Command
            </button>
          </div>
        </div>

        <aside className="mt-px mr-[7px] mb-[9px] ml-[9px] flex w-[352px] shrink-0 flex-col overflow-hidden border-t-2 border-r border-l-2 border-[#808080] border-r-[#e0e0e0] bg-white">
          <ModelTree />
          <div className="mt-auto mr-[74px] mb-[11px] ml-[26px] h-[2px] bg-[#888]" />
        </aside>

        <div className="relative mt-px mb-[9px] min-w-0 flex-1 overflow-hidden border-t-2 border-l-2 border-[#777] bg-white">
          <Viewport />
          <div className="absolute bottom-0 left-[8px] font-['Liberation_Mono',monospace] text-[17px] leading-[33px] whitespace-nowrap text-[#0000ff]">
            <p>Hold 'X','Y', or 'Z' key to constrain relative movement.</p>
            <p>Ctrl-Click to change reference position.</p>
            <p>Use context menu to choose In Plane movement.</p>
          </div>
        </div>
      </main>

      <footer className="relative flex h-[74px] shrink-0 border-t-2 border-[#808080]">
        <div className="flex w-[1286px] shrink-0 border-r-2 border-[#808080] pt-[4px] pl-[5px]">
          <DockHandle />
          <div className="mr-[12px] ml-[2px] flex-1 border-t-2 border-r border-l-2 border-[#8a8f99] bg-white" />
        </div>
        <div className="flex min-w-0 flex-1 pt-[4px] pl-[4px]">
          <DockHandle />
          <div className="ml-[2px] flex-1 border-t-2 border-l-2 border-[#777] bg-white" />
        </div>
        <span className="absolute right-[14px] bottom-[4px] font-['Roboto',sans-serif] text-[16px] leading-6 text-[#8c8c8c]">
          CSDN @WHS-_-2022
        </span>
      </footer>

      <MeasureDialog />

      <svg viewBox="0 0 2311 1302" preserveAspectRatio="xMinYMin slice" className="pointer-events-none absolute inset-0 z-20 size-full">
        <path d="M290 274l18-2-2 5L910 509.500 1230 634 1623 785 1230 636 909 514 304 283l-1 4z" fill="#ff3838" />
        <path d="M1400 702L1623 786" stroke="#ff4038" strokeWidth="1" />
        <path d="M1640.500 743.500h104v95h-104z" fill="none" stroke="#ff3838" strokeWidth="2.500" />
      </svg>
    </div>
  )
}
